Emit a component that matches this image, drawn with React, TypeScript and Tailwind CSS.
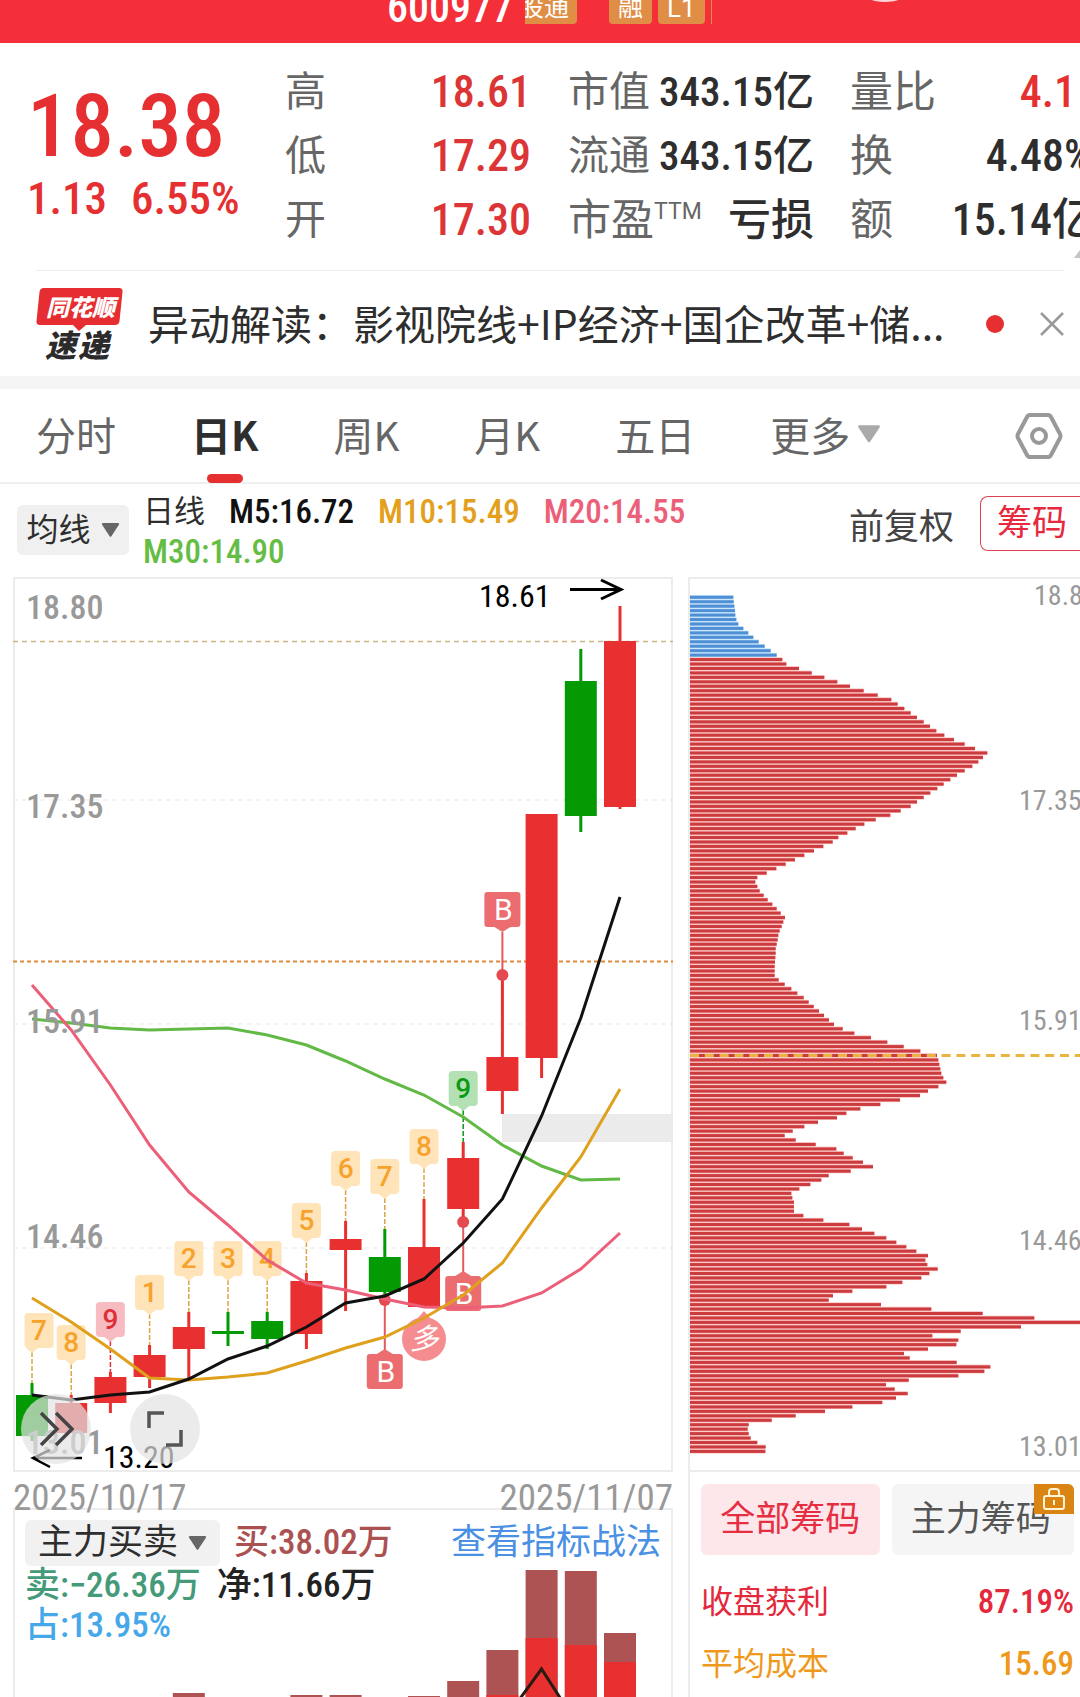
const CANDLES = [
  { up: false, top: 818, bottom: 859, high: 806, low: 864 },
  { up: true, top: 826, bottom: 856, high: 818, low: 856 },
  { up: true, top: 800, bottom: 826, high: 795, low: 836 },
  { up: true, top: 778, bottom: 800, high: 768, low: 811 },
  { up: true, top: 750, bottom: 772, high: 735, low: 803 },
  { up: false, top: 754, bottom: 757, high: 735, low: 769 },
  { up: false, top: 744, bottom: 762, high: 735, low: 772 },
  { up: true, top: 704, bottom: 757, high: 696, low: 772 },
  { up: true, top: 662, bottom: 673, high: 644, low: 734 },
  { up: false, top: 680, bottom: 715, high: 652, low: 720 },
  { up: true, top: 670, bottom: 730, high: 622, low: 730 },
  { up: true, top: 581, bottom: 632, high: 565, low: 644 },
  { up: true, top: 480, bottom: 514, high: 398, low: 537 },
  { up: true, top: 237, bottom: 481, high: 237, low: 501 },
  { up: false, top: 104, bottom: 239, high: 72, low: 255 },
  { up: true, top: 64, bottom: 230, high: 29, low: 232 },
];

const AVERAGES = [
  { color: "#62b946", values: [442, 446, 451, 453, 452, 451, 458, 468, 484, 502, 518, 540, 568, 589, 603, 602] },
  { color: "#eb5f78", values: [408, 453, 508, 568, 615, 648, 683, 706, 713, 722, 730, 731, 729, 716, 692, 656] },
  { color: "#dfa01d", values: [721, 745, 772, 801, 803, 800, 796, 784, 771, 760, 741, 718, 686, 631, 580, 512] },
  { color: "#111111", values: [818, 823, 818, 815, 802, 782, 769, 750, 726, 719, 702, 666, 622, 539, 441, 320] },
];

const TAGS = [
  { at: 0, text: "7", y: 736, shift: 7, bg: "#ffe3b9", color: "#f6a22b" },
  { at: 1, text: "8", y: 748, shift: 0, bg: "#ffe3b9", color: "#f6a22b" },
  { at: 2, text: "9", y: 725, shift: 0, bg: "#f6bcc2", color: "#dd2f36" },
  { at: 3, text: "1", y: 698, shift: 0, bg: "#ffe3b9", color: "#f6a22b" },
  { at: 4, text: "2", y: 664, shift: 0, bg: "#ffe3b9", color: "#f6a22b" },
  { at: 5, text: "3", y: 664, shift: 0, bg: "#ffe3b9", color: "#f6a22b" },
  { at: 6, text: "4", y: 664, shift: 0, bg: "#ffe3b9", color: "#f6a22b" },
  { at: 7, text: "5", y: 626, shift: 0, bg: "#ffe3b9", color: "#f6a22b" },
  { at: 8, text: "6", y: 574, shift: 0, bg: "#ffe3b9", color: "#f6a22b" },
  { at: 9, text: "7", y: 582, shift: 0, bg: "#ffe3b9", color: "#f6a22b" },
  { at: 10, text: "8", y: 552, shift: 0, bg: "#ffe3b9", color: "#f6a22b" },
  { at: 11, text: "9", y: 494, shift: 0, bg: "#b3e1b4", color: "#0a9b12" },
];

// box: top edge of the label, dot: point on the candle
const BUYS = [
  { at: 12, box: 315, dot: 398 },
  { at: 11, box: 699, dot: 645 },
  { at: 9, box: 777, dot: 723 },
];

const PRICES = [
  { text: "18.80", y: 42 },
  { text: "17.35", y: 241 },
  { text: "15.91", y: 456 },
  { text: "14.46", y: 671 },
  { text: "13.01", y: 877 },
];

const VOLUMES = [
  { at: 4, top: 185, red: 200 },
  { at: 7, top: 187, red: 200 },
  { at: 8, top: 187, red: 200 },
  { at: 10, top: 188, red: 200 },
  { at: 11, top: 173, red: 200 },
  { at: 12, top: 142, red: 187 },
  { at: 13, top: 62, red: 130 },
  { at: 14, top: 63, red: 137 },
  { at: 15, top: 125, red: 154 },
];

// chip distribution, one value per price step, in thirds of a unit
const CHIPS = [
  130, 131, 133, 135, 136, 139, 145, 160, 175, 190, 206, 224, 242, 260,
  277, 289, 327, 365, 403, 442, 480, 521, 563, 604, 623, 643, 662, 681, 701, 720,
  739, 763, 792, 824, 855, 892, 879, 865, 847, 824, 801, 781, 761, 742, 721, 701,
  681, 662, 632, 601, 557, 523, 497, 472, 445, 428, 400, 372, 343, 315, 287, 259,
  230, 202, 196, 202, 209, 221, 233, 247, 260, 272, 285, 280, 275, 269, 265, 263,
  260, 257, 257, 256, 255, 254, 254, 254, 266, 284, 304, 322, 341, 356, 371, 387,
  402, 417, 432, 458, 493, 543, 592, 641, 691, 741, 745, 748, 751, 754, 760, 769,
  745, 714, 690, 630, 571, 511, 469, 441, 384, 343, 308, 284, 317, 377, 439, 461,
  488, 519, 549, 482, 416, 394, 361, 328, 304, 307, 312, 312, 312, 340, 400, 478,
  516, 553, 589, 619, 649, 679, 714, 706, 712, 743, 718, 694, 637, 589, 487, 429,
  416, 573, 724, 878, 1033, 1173, 993, 812, 727, 805, 799, 714, 642, 659, 800, 901,
  883, 805, 656, 588, 614, 653, 618, 577, 487, 405, 317, 245, 176, 173, 176, 182,
  202, 227, 226,
];

const CHIP_PRICES = [
  { text: "18.80", x: 344, y: 28 },
  { text: "17.35", x: 329, y: 233 },
  { text: "15.91", x: 329, y: 453 },
  { text: "14.46", x: 329, y: 673 },
  { text: "13.01", x: 329, y: 879 },
];

const TABS = ["分时", "日K", "周K", "月K", "五日"];

const candleX = (i: number) => 19 + i * 39.2;

const Caret = ({ className }: { className: string }) => (
  <svg viewBox="0 0 20 16" className={className} fill="currentColor" aria-hidden="true">
    <path d="M1.5 0h17c1.2 0 1.8 1 1.1 2L11 15c-.5.8-1.500.8-2 0L.4 2C-.3 1 .3 0 1.500 0z" />
  </svg>
);

const Header = () => (
  <header className="relative flex h-[43px] items-end overflow-hidden bg-[#f42f3a] pb-[19px] pl-[387px] text-white">
    <h1 className="mr-3 text-[42px] font-medium leading-[32px]">600977</h1>
    <span className="mr-8 flex h-8 w-[52px] shrink-0 justify-end overflow-hidden whitespace-nowrap rounded-r-sm bg-[#e08d46] pr-2 text-[25px] leading-8">
      股通
    </span>
    <span className="mr-1.5 h-8 shrink-0 rounded-sm bg-[#e08d46] px-[9px] text-[25px] leading-8">融</span>
    <span className="mr-1.5 h-8 shrink-0 rounded-sm bg-[#e08d46] px-[9px] font-[Roboto] text-[26px] leading-8">L1</span>
    <span className="h-8 w-px bg-[#e08d46]" />
    <svg viewBox="0 0 40 4" className="absolute left-[865px] top-0 h-1 w-10" aria-hidden="true">
      <ellipse cx="20" cy="-8" rx="22" ry="10" fill="#fbd5d8" />
    </svg>
  </header>
);

const Quote = () => (
  <section className="relative flex overflow-hidden pb-[18px] pt-[17px]">
    <div className="w-[285px] shrink-0 pl-[27px] pt-[17px] font-medium text-[#e62f31]">
      <p className="text-[87px] leading-[98px]">18.38</p>
      <p className="flex gap-6 text-[45px] leading-[48px]">
        <span>1.13</span>
        <span>6.55%</span>
      </p>
    </div>
    <dl className="w-[246px] shrink-0 text-[44px] leading-[64px] text-[#dc3536]">
      <div className="flex justify-between">
        <dt className="text-[41px] text-[#666]">高</dt>
        <dd className="font-medium">18.61</dd>
      </div>
      <div className="flex justify-between">
        <dt className="text-[41px] text-[#666]">低</dt>
        <dd className="font-medium">17.29</dd>
      </div>
      <div className="flex justify-between">
        <dt className="text-[41px] text-[#666]">开</dt>
        <dd className="font-medium">17.30</dd>
      </div>
    </dl>
    <dl className="ml-[37px] w-[246px] shrink-0 text-[41px] leading-[64px] text-[#2e2e2e]">
      <div className="flex justify-between">
        <dt className="text-[#666]">市值</dt>
        <dd className="font-medium">343.15亿</dd>
      </div>
      <div className="flex justify-between">
        <dt className="text-[#666]">流通</dt>
        <dd className="font-medium">343.15亿</dd>
      </div>
      <div className="flex justify-between">
        <dt className="flex text-[43px] text-[#666]">
          市盈<span className="font-[Roboto] text-[23px] leading-[48px]">TTM</span>
        </dt>
        <dd className="text-[43px] font-medium">亏损</dd>
      </div>
    </dl>
    <dl className="ml-9 w-[246px] shrink-0 text-[44px] leading-[64px] text-[#2e2e2e]">
      <div className="flex justify-between">
        <dt className="text-[43px] text-[#666]">量比</dt>
        <dd className="pr-5 font-medium text-[#e62f31]">4.1</dd>
      </div>
      <div className="flex justify-between">
        <dt className="text-[43px] text-[#666]">换</dt>
        <dd className="pr-1 font-medium">4.48%</dd>
      </div>
      <div className="flex justify-between">
        <dt className="text-[43px] text-[#666]">额</dt>
        <dd className="font-medium">15.14亿</dd>
      </div>
    </dl>
    <svg viewBox="0 0 6 8" className="absolute bottom-3 right-0 h-2 w-1.5" aria-hidden="true">
      <path d="M6 0v8H0z" fill="#c4c4c4" />
    </svg>
  </section>
);

const News = () => (
  <section className="ml-9 mr-4 flex h-[106px] items-center border-t border-[#ececec]">
    <svg viewBox="0 0 88 72" className="h-[72px] w-[88px] shrink-0" aria-label="同花顺速递">
      <path d="M8 0h75q4 0 3.500 4l-3 29q-.5 4-4.500 4H50l-7 6-6-6H4q-4 0-3.500-4l3-29Q4 0 8 0z" fill="#e62e32" />
      <text x="10" y="28" fontSize="23" fontWeight="900" fontStyle="italic" fill="#fff">同花顺</text>
      <text x="9" y="69" fontSize="31" fontWeight="900" fontStyle="italic" fill="#2b2b2b">速</text>
      <text x="42" y="69" fontSize="31" fontWeight="900" fontStyle="italic" fill="#2b2b2b">递</text>
    </svg>
    <a href="#news" className="ml-6 flex-1 whitespace-nowrap pb-1 font-['Noto_Sans_CJK_SC',sans-serif] text-[41px] leading-[56px] text-[#2e2e2e]">
      异动解读：影视院线+IP经济+国企改革+储...
    </a>
    <span className="mr-9 h-[18px] w-[18px] rounded-full bg-[#e62f31]" />
    <button type="button" aria-label="关闭">
      <svg viewBox="0 0 24 24" className="h-6 w-6" fill="none" stroke="#999" strokeWidth="2.500">
        <path d="M1 1l22 22M23 1L1 23" />
      </svg>
    </button>
  </section>
);

const Tabs = () => (
  <nav className="flex h-[95px] items-start gap-[75px] border-b-2 border-[#efefef] pl-9 pr-[17px] font-['Noto_Sans_CJK_SC',sans-serif] text-[40px] leading-[90px] text-[#666]">
    {TABS.map((tab) => (
      <button
        key={tab}
        type="button"
        className={tab === "日K" ? "relative shrink-0 font-bold text-[#2e2e2e]" : "shrink-0"}
      >
        {tab}
        {tab === "日K" && (
          <span className="absolute -bottom-1 left-1/2 h-[9px] w-9 -translate-x-1/2 rounded-full bg-[#e62f31]" />
        )}
      </button>
    ))}
    <button type="button" className="flex shrink-0 items-center gap-2">
      更多
      <Caret className="h-[18px] w-[22px] text-[#aaa]" />
    </button>
    <button type="button" aria-label="设置" className="ml-auto self-center">
      <svg viewBox="0 0 48 46" className="h-[46px] w-12" fill="none" stroke="#999" strokeWidth="4">
        <path d="M15 2h18q2 0 3 2l9 17q1 2 0 4l-9 17q-1 2-3 2H15q-2 0-3-2L3 25q-1-2 0-4l9-17q1-2 3-2z" />
        <circle cx="24" cy="23" r="7" />
      </svg>
    </button>
  </nav>
);

const Legend = () => (
  <section className="flex h-[93px] overflow-hidden">
    <button
      type="button"
      className="ml-[17px] mt-[21px] flex h-[50px] w-28 shrink-0 items-center justify-center gap-2.5 rounded-md bg-[#f0f0f0] text-[32px] text-[#2e2e2e]"
    >
      均线
      <Caret className="h-[14px] w-[19px] text-[#666]" />
    </button>
    <div className="ml-[14px] flex flex-1 flex-wrap content-start gap-x-6 pr-24 pt-2 text-[33px] leading-[40px]">
      <span className="text-[31px] text-[#2e2e2e]">日线</span>
      <span className="font-medium text-[#111]">M5:16.72</span>
      <span className="font-medium text-[#e3a01d]">M10:15.49</span>
      <span className="font-medium text-[#eb6078]">M20:14.55</span>
      <span className="font-medium text-[#66bd45]">M30:14.90</span>
    </div>
    <button type="button" className="mr-[26px] shrink-0 self-start pt-[19px] text-[35px] leading-[50px] text-[#444]">
      前复权
    </button>
    <button
      type="button"
      className="mt-3 h-[55px] w-[100px] shrink-0 rounded-l-lg border border-r-0 border-[#dc4455] pl-4 text-left text-[35px] leading-[54px] text-[#e8283c]"
    >
      筹码
    </button>
  </section>
);

const KLine = () => (
  <div className="relative">
    <svg viewBox="0 0 660 895" className="block w-full">
      <rect x="1" y="1" width="658" height="893" fill="none" stroke="#ececec" strokeWidth="2" />
      <path d="M0 223H660M0 447H660M0 671H660" stroke="#e9e9e9" strokeDasharray="5 4" />
      <path d="M0 64.500H660" stroke="#cdb583" strokeWidth="1.500" strokeDasharray="5 4" />
      <path d="M0 384.500H660" stroke="#dd8a3e" strokeWidth="2" strokeDasharray="4 3" />
      <rect x="489" y="537" width="171" height="28" fill="#ebebeb" />

      {TAGS.map((tag) => {
        const x = candleX(tag.at);
        return (
          <g key={tag.at}>
            <path
              d={`M${x} ${tag.y + 39}V${CANDLES[tag.at].high}`}
              stroke={tag.bg === "#ffe3b9" ? "#dba544" : tag.color}
              strokeWidth="1.500"
              strokeDasharray="5 2"
            />
            <rect x={x + tag.shift - 14.5} y={tag.y} width="29" height="35" rx="4" fill={tag.bg} />
            <path d={`M${x - 6} ${tag.y + 35}h12l-6 5z`} fill={tag.bg} />
          </g>
        );
      })}

      {CANDLES.map((candle, i) => (
        <g key={i} fill={candle.up ? "#e83030" : "#039a03"}>
          <rect x={candleX(i) - 1.5} y={candle.high} width="3" height={candle.low - candle.high} />
          <rect x={candleX(i) - 16} y={candle.top} width="32" height={candle.bottom - candle.top} />
        </g>
      ))}

      {TAGS.map((tag) => (
        <text
          key={tag.at}
          x={candleX(tag.at) + tag.shift}
          y={tag.y + 27}
          textAnchor="middle"
          fontSize="28"
          fontWeight="500"
          fill={tag.color}
          className="font-[Roboto]"
        >
          {tag.text}
        </text>
      ))}

      {BUYS.map((buy) => {
        const x = candleX(buy.at);
        const above = buy.box < buy.dot;
        return (
          <g key={buy.at} fill="#eb6d70">
            <path d={`M${x} ${above ? buy.box + 40 : buy.box - 4}V${buy.dot}`} stroke="#e25a5f" strokeWidth="2" />
            <circle cx={x} cy={buy.dot} r="6" fill="#e44a50" />
            <rect x={x - 18} y={buy.box} width="36" height="35" rx="3" />
            <path d={above ? `M${x - 8} ${buy.box + 35}h16l-8 5z` : `M${x - 8} ${buy.box}h16l-8-5z`} />
            <text x={x + 1} y={buy.box + 28} textAnchor="middle" fontSize="30" fill="#fff" className="font-[Roboto]">
              B
            </text>
          </g>
        );
      })}
      <g fill="#f58d90">
        <circle cx="411" cy="762" r="22" />
        <path d="M404 742l7-8 7 8z" />
        <text x="411" y="772" textAnchor="middle" fontSize="29" fontStyle="italic" fill="#fff">多</text>
      </g>

      {AVERAGES.map((line) => (
        <polyline
          key={line.color}
          points={line.values.map((y, i) => `${candleX(i)},${y}`).join(" ")}
          fill="none"
          stroke={line.color}
          strokeWidth="3"
        />
      ))}

      {PRICES.map((price) => (
        <text key={price.text} x="13" y={price.y} fontSize="34" fontWeight="500" fill="#999">
          {price.text}
        </text>
      ))}
      <text x="466" y="30" fontSize="32">18.61</text>
      <path d="M557 12.500h50M588 3l20 9.500L588 22" fill="none" stroke="#000" strokeWidth="3" />
      <text x="90" y="891" fontSize="32">13.20</text>
      <path d="M69 881H20M37 873l-17 8 17 9" fill="none" stroke="#000" strokeWidth="2.500" />
    </svg>
    <div className="absolute bottom-2 left-2 flex gap-[39px]">
      <button
        type="button"
        aria-label="后移"
        className="flex h-[70px] w-[70px] items-center justify-center rounded-full bg-[#e2e2e2]/70"
      >
        <svg viewBox="0 0 36 36" className="h-9 w-9" fill="none" stroke="#444" strokeWidth="3.500">
          <path d="M3 2l16 16L3 34M18 2l16 16-16 16" />
        </svg>
      </button>
      <button
        type="button"
        aria-label="全屏"
        className="flex h-[70px] w-[70px] items-center justify-center rounded-full bg-[#e2e2e2]/70"
      >
        <svg viewBox="0 0 36 36" className="h-9 w-9" fill="none" stroke="#555" strokeWidth="3.500">
          <path d="M2 17V2h15M19 34h15V19" />
        </svg>
      </button>
    </div>
  </div>
);

const MainForce = () => (
  <div className="relative min-h-[189px] flex-1 overflow-hidden border-2 border-b-0 border-[#ececec]">
    <svg viewBox="0 0 660 190" className="absolute -left-0.5 -right-0.5 top-0 w-[calc(100%+4px)]" aria-hidden="true">
      {VOLUMES.map((bar) => (
        <g key={bar.at}>
          <rect x={candleX(bar.at) - 16} y={bar.top - 2} width="32" height={192 - bar.top} fill="#ae5353" />
          <rect x={candleX(bar.at) - 16} y={bar.red - 2} width="32" height="80" fill="#e83030" />
        </g>
      ))}
      <path d="M506 190l22.500-31 20 31" fill="none" stroke="#2a1a10" strokeWidth="3" />
    </svg>
    <div className="relative px-2.5 pt-2.5 text-[35px] leading-[40px]">
      <div className="flex h-[46px] items-center">
        <button
          type="button"
          className="mr-[14px] flex h-[46px] items-center gap-2.5 rounded-md bg-[#f1f1f1] px-[13px] text-[#2e2e2e]"
        >
          主力买卖
          <Caret className="h-[14px] w-[19px] text-[#666]" />
        </button>
        <span className="font-medium text-[#ac5152]">买:38.02万</span>
        <a href="#tactics" className="ml-auto text-[#4a90e3]">
          查看指标战法
        </a>
      </div>
      <p className="flex gap-4 font-medium">
        <span className="text-[#459a7a]">卖:−26.36万</span>
        <span className="text-[#222]">净:11.66万</span>
      </p>
      <p className="font-medium text-[#46a8e8]">占:13.95%</p>
    </div>
  </div>
);

const ChipChart = () => (
  <div className="overflow-hidden border-b-2 border-t-2 border-[#ececec]">
    <svg viewBox="0 0 390 891" className="block w-full">
      {CHIPS.map((value, i) => (
        <g key={i}>
          <rect
            x="0"
            y={16 + i * 4.4485}
            width={value / 3}
            height="4.450"
            fill={i < 14 ? "#bfe0f7" : "#f9bdbd"}
          />
          <rect
            x="0"
            y={16.8 + i * 4.4485}
            width={value / 3}
            height="3"
            fill={i < 14 ? "#4f8fd6" : "#cc3c3e"}
          />
        </g>
      ))}
      <path d="M0 476.500H390" stroke="#e9b440" strokeWidth="3" strokeDasharray="9 5.800" />
      {CHIP_PRICES.map((price) => (
        <text key={price.text} x={price.x} y={price.y - 2} fontSize="28" fill="#999">
          {price.text}
        </text>
      ))}
    </svg>
  </div>
);

const ChipPanel = () => (
  <div className="pl-[11px] pr-1.5 pt-3">
    <div className="flex gap-3 text-[35px] leading-[72px]">
      <button type="button" className="h-[71px] flex-1 rounded-md bg-[#fee7ea] text-[#e62e42]">
        全部筹码
      </button>
      <button type="button" className="relative h-[71px] flex-1 rounded-md bg-[#f5f5f5] pr-1 text-[#555]">
        主力筹码
        <span className="absolute right-0 top-0 flex h-[30px] w-10 items-center justify-center rounded-tr-md bg-[#d98413]">
          <svg viewBox="0 0 24 24" className="h-6 w-6" fill="none" stroke="#fff3d6" strokeWidth="2">
            <rect x="2" y="9" width="20" height="13" rx="2" />
            <path d="M7 9V5q0-3 3-3h4q3 0 3 3v4M12 13v5" />
          </svg>
        </span>
      </button>
    </div>
    <dl className="pt-4 text-[32px] leading-[62px]">
      <div className="flex justify-between text-[#e4293c]">
        <dt>收盘获利</dt>
        <dd className="text-[33px] font-medium">87.19%</dd>
      </div>
      <div className="flex justify-between text-[#ef991c]">
        <dt>平均成本</dt>
        <dd className="text-[33px] font-medium">15.69</dd>
      </div>
    </dl>
  </div>
);

const App = () => {
  return (
    <div className="flex min-h-screen w-full flex-col overflow-hidden bg-white font-['Roboto_Condensed',Roboto,'Noto_Sans_CJK_SC',sans-serif]">
      <Header />
      <Quote />
      <News />
      <div className="h-[13px] bg-[#f5f5f5]" />
      <Tabs />
      <Legend />
      <main className="flex flex-1 gap-[15px] pl-[13px]">
        <div className="flex min-w-0 flex-[660] flex-col">
          <KLine />
          <div className="relative z-10 flex h-9 justify-between text-[37px] leading-[52px] text-[#999]">
            <time>2025/10/17</time>
            <time>2025/11/07</time>
          </div>
          <MainForce />
        </div>
        <div className="min-w-0 flex-[390] border-l-2 border-[#ececec]">
          <ChipChart />
          <ChipPanel />
        </div>
      </main>
    </div>
  );
};

export default App;
